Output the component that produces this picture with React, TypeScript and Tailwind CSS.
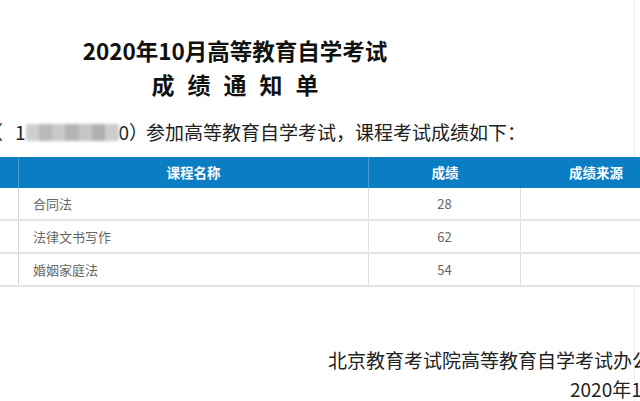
const font = { fontFamily: '"Noto Sans CJK SC", "Noto Sans", sans-serif' };

const rows = [
  { name: '合同法', score: '28' },
  { name: '法律文书写作', score: '62' },
  { name: '婚姻家庭法', score: '54' },
];

const blurBlocks = ['bg-[#cfcfcf]', 'bg-[#b9b9b9]', 'bg-[#c9c9c9]', 'bg-[#b3b3b3]', 'bg-[#c6c6c6]', 'bg-[#b0b0b0]', 'bg-[#cdcdcd]'];

export default function App() {
  return (
    <main className="w-[640px] h-[401px] overflow-hidden bg-white text-[#222]" style={font}>
      <div className="w-[635px] h-full border-r border-[#ececec] pt-[35px]">
        <div className="w-[470px] text-center">
          <h1 className="text-[22.5px] leading-[30px] font-bold text-[#111] whitespace-nowrap">2020年10月高等教育自学考试</h1>
          <div className="mt-[4px] flex justify-center gap-[13px] text-[23px] leading-[30px] font-bold text-[#111]">
            <span>成</span>
            <span>绩</span>
            <span>通</span>
            <span>知</span>
            <span>单</span>
          </div>
        </div>

        <p className="mt-[20px] ml-[-16px] flex items-center text-[19px] leading-[26px] whitespace-nowrap">
          <span>（</span>
          <span className="ml-[12px]">1</span>
          <span className="flex h-[17px] w-[93px] blur-[1.5px]">
            {blurBlocks.map((c, i) => (
              <span key={i} className={`flex-1 ${c}`} />
            ))}
          </span>
          <span>0）</span>
          <span className="ml-[-2px]">参加高等教育自学考试，课程考试成绩如下：</span>
        </p>

        <div className="mt-[12px] w-[671px] text-[13px]">
          <div className="grid grid-cols-[19px_350px_152px_150px] h-[31px] bg-[#0b7dc3] text-white font-bold text-[13.5px]">
            <div className="border-r border-white/25" />
            <div className="border-r border-white/25 flex items-center justify-center">课程名称</div>
            <div className="flex items-center justify-center">成绩</div>
            <div className="flex items-center justify-center">成绩来源</div>
          </div>
          {rows.map(r => (
            <div key={r.name} className="grid grid-cols-[19px_350px_152px_150px] h-[33px] bg-white border-b-2 border-[#e3e3e3] text-[#666]">
              <div className="border-r border-[#d4d4d4]" />
              <div className="border-r border-[#dedede] flex items-center pl-[14px]">{r.name}</div>
              <div className="border-r border-[#dedede] flex items-center justify-center">{r.score}</div>
              <div />
            </div>
          ))}
        </div>

        <div className="mt-[58px] text-[19px] leading-[29px] whitespace-nowrap">
          <p className="pl-[328px]">北京教育考试院高等教育自学考试办公室</p>
          <p className="pl-[570px]">2020年10月</p>
        </div>
      </div>
    </main>
  );
}
